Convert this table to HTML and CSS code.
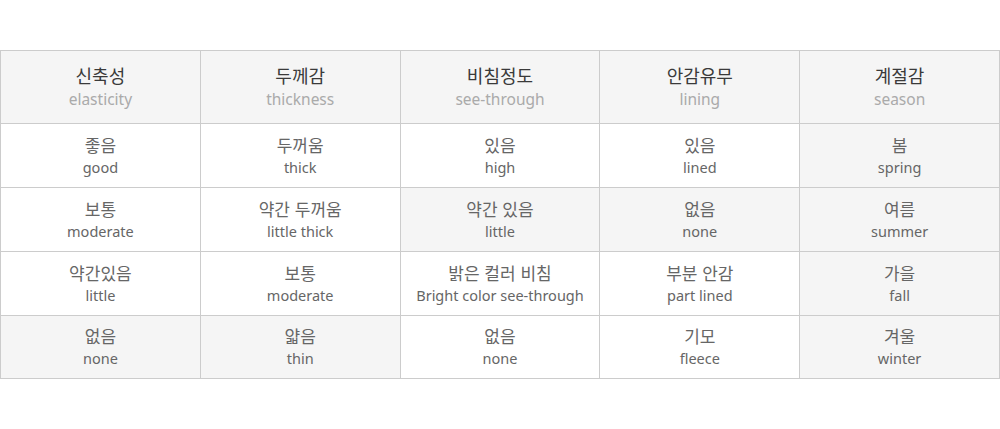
FILE: index.html
```html
<!DOCTYPE html>
<html lang="ko">
<head>
<meta charset="utf-8">
<link rel="stylesheet" href="styles.css">
</head>
<body>
<table class="spec">
  <thead>
    <tr>
      <th><span class="ko">신축성</span><span class="en">elasticity</span></th>
      <th><span class="ko">두께감</span><span class="en">thickness</span></th>
      <th><span class="ko">비침정도</span><span class="en">see-through</span></th>
      <th><span class="ko">안감유무</span><span class="en">lining</span></th>
      <th><span class="ko">계절감</span><span class="en">season</span></th>
    </tr>
  </thead>
  <tbody>
    <tr>
      <td><span class="ko">좋음</span><span class="en">good</span></td>
      <td><span class="ko">두꺼움</span><span class="en">thick</span></td>
      <td><span class="ko">있음</span><span class="en">high</span></td>
      <td><span class="ko">있음</span><span class="en">lined</span></td>
      <td class="on"><span class="ko">봄</span><span class="en">spring</span></td>
    </tr>
    <tr>
      <td><span class="ko">보통</span><span class="en">moderate</span></td>
      <td><span class="ko">약간 두꺼움</span><span class="en">little thick</span></td>
      <td class="on"><span class="ko">약간 있음</span><span class="en">little</span></td>
      <td class="on"><span class="ko">없음</span><span class="en">none</span></td>
      <td class="on"><span class="ko">여름</span><span class="en">summer</span></td>
    </tr>
    <tr>
      <td><span class="ko">약간있음</span><span class="en">little</span></td>
      <td><span class="ko">보통</span><span class="en">moderate</span></td>
      <td><span class="ko">밝은 컬러 비침</span><span class="en">Bright color see-through</span></td>
      <td><span class="ko">부분 안감</span><span class="en">part lined</span></td>
      <td class="on"><span class="ko">가을</span><span class="en">fall</span></td>
    </tr>
    <tr>
      <td class="on"><span class="ko">없음</span><span class="en">none</span></td>
      <td class="on"><span class="ko">얇음</span><span class="en">thin</span></td>
      <td><span class="ko">없음</span><span class="en">none</span></td>
      <td><span class="ko">기모</span><span class="en">fleece</span></td>
      <td class="on"><span class="ko">겨울</span><span class="en">winter</span></td>
    </tr>
  </tbody>
</table>
</body>
</html>
```
FILE: styles.css
```css
html, body {
  margin: 0;
  padding: 0;
  background: #fff;
}
body {
  font-family: "Noto Sans", "Noto Sans CJK KR", sans-serif;
  padding-top: 50px;
}
.spec {
  width: 1000px;
  border-collapse: collapse;
  table-layout: fixed;
}
.spec th, .spec td {
  border: 1px solid #cccccc;
  text-align: center;
  vertical-align: middle;
  font-weight: normal;
  padding: 0;
}
.spec th {
  height: 72px;
  background: #f5f5f5;
}
.spec td {
  height: 63px;
}
.spec tbody tr:last-child td {
  height: 62px;
}
.spec td.on {
  background: #f5f5f5;
}
.ko, .en {
  display: block;
}
.spec th .ko {
  font-family: "Noto Sans CJK KR", sans-serif;
  font-size: 18px;
  line-height: 24px;
  color: #3a3a3a;
}
.spec th .en {
  font-size: 15.5px;
  line-height: 24px;
  color: #aaaaaa;
}
.spec td .ko {
  font-family: "Noto Sans CJK KR", sans-serif;
  font-size: 17px;
  line-height: 23px;
  color: #666666;
}
.spec td .en {
  font-size: 14.5px;
  line-height: 23px;
  color: #666666;
}
```
